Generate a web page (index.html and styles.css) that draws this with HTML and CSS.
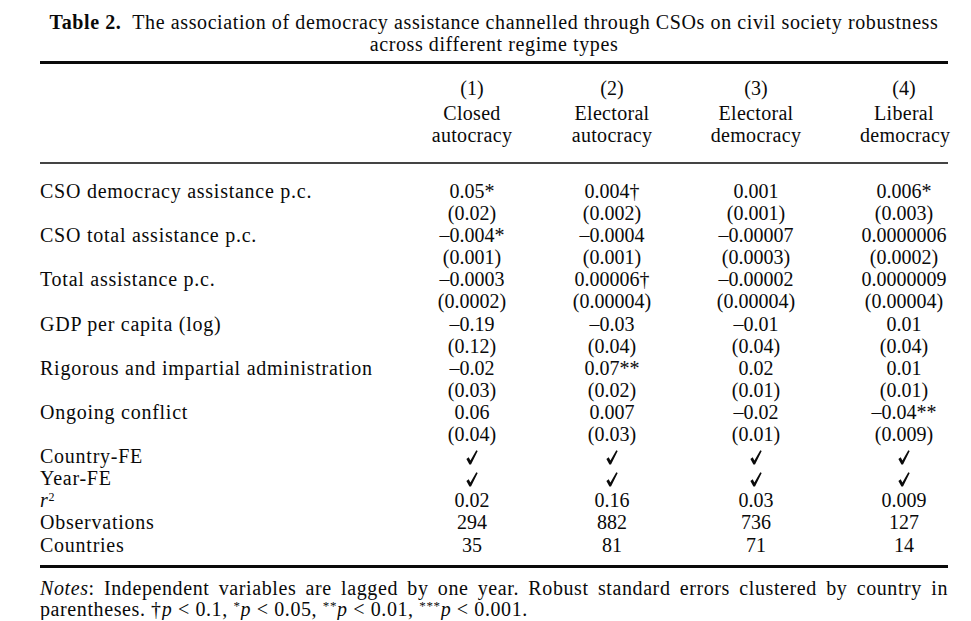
FILE: index.html
```html
<!DOCTYPE html>
<html lang="en">
<head>
<meta charset="utf-8">
<title>Table 2</title>
<link rel="stylesheet" href="styles.css">
</head>
<body>
<svg width="0" height="0" class="defs" aria-hidden="true">
  <defs>
    <symbol id="tick" viewBox="0 0 12 15">
      <path d="M0.4 8.9 L2.7 7.3 L4.4 10.5 L10.3 0.3 L11.7 1.1 L5.0 14.6 L3.4 14.6 Z"/>
    </symbol>
  </defs>
</svg>
<div class="page">
  <div class="caption">
    <p class="cap-line"><b>Table 2.</b>&nbsp; The association of democracy assistance channelled through CSOs on civil society robustness</p>
    <p class="cap-line">across different regime types</p>
  </div>

  <div class="table">
    <div class="head row">
      <div class="lab"></div>
      <div class="cell"><div class="num">(1)</div><div class="hd">Closed<br>autocracy</div></div>
      <div class="cell"><div class="num">(2)</div><div class="hd">Electoral<br>autocracy</div></div>
      <div class="cell"><div class="num">(3)</div><div class="hd">Electoral<br>democracy</div></div>
      <div class="cell c4"><div class="num">(4)</div><div class="hd">Liberal<br>democracy</div></div>
    </div>

    <div class="body">
      <div class="row"><div class="lab">CSO democracy assistance p.c.</div><div class="cell">0.05*</div><div class="cell">0.004†</div><div class="cell">0.001</div><div class="cell c4">0.006*</div></div>
      <div class="row"><div class="lab"></div><div class="cell">(0.02)</div><div class="cell">(0.002)</div><div class="cell">(0.001)</div><div class="cell c4">(0.003)</div></div>
      <div class="row"><div class="lab">CSO total assistance p.c.</div><div class="cell">–0.004*</div><div class="cell">–0.0004</div><div class="cell">–0.00007</div><div class="cell c4">0.0000006</div></div>
      <div class="row"><div class="lab"></div><div class="cell">(0.001)</div><div class="cell">(0.001)</div><div class="cell">(0.0003)</div><div class="cell c4">(0.0002)</div></div>
      <div class="row"><div class="lab">Total assistance p.c.</div><div class="cell">–0.0003</div><div class="cell">0.00006†</div><div class="cell">–0.00002</div><div class="cell c4">0.0000009</div></div>
      <div class="row"><div class="lab"></div><div class="cell">(0.0002)</div><div class="cell">(0.00004)</div><div class="cell">(0.00004)</div><div class="cell c4">(0.00004)</div></div>
      <div class="row"><div class="lab">GDP per capita (log)</div><div class="cell">–0.19</div><div class="cell">–0.03</div><div class="cell">–0.01</div><div class="cell c4">0.01</div></div>
      <div class="row"><div class="lab"></div><div class="cell">(0.12)</div><div class="cell">(0.04)</div><div class="cell">(0.04)</div><div class="cell c4">(0.04)</div></div>
      <div class="row"><div class="lab">Rigorous and impartial administration</div><div class="cell">–0.02</div><div class="cell">0.07**</div><div class="cell">0.02</div><div class="cell c4">0.01</div></div>
      <div class="row"><div class="lab"></div><div class="cell">(0.03)</div><div class="cell">(0.02)</div><div class="cell">(0.01)</div><div class="cell c4">(0.01)</div></div>
      <div class="row"><div class="lab">Ongoing conflict</div><div class="cell">0.06</div><div class="cell">0.007</div><div class="cell">–0.02</div><div class="cell c4">–0.04**</div></div>
      <div class="row"><div class="lab"></div><div class="cell">(0.04)</div><div class="cell">(0.03)</div><div class="cell">(0.01)</div><div class="cell c4">(0.009)</div></div>
      <div class="row"><div class="lab">Country-FE</div><div class="cell"><svg class="tick"><use href="#tick"/></svg></div><div class="cell"><svg class="tick"><use href="#tick"/></svg></div><div class="cell"><svg class="tick"><use href="#tick"/></svg></div><div class="cell c4"><svg class="tick"><use href="#tick"/></svg></div></div>
      <div class="row"><div class="lab">Year-FE</div><div class="cell"><svg class="tick"><use href="#tick"/></svg></div><div class="cell"><svg class="tick"><use href="#tick"/></svg></div><div class="cell"><svg class="tick"><use href="#tick"/></svg></div><div class="cell c4"><svg class="tick"><use href="#tick"/></svg></div></div>
      <div class="row"><div class="lab"><i>r</i><sup>2</sup></div><div class="cell">0.02</div><div class="cell">0.16</div><div class="cell">0.03</div><div class="cell c4">0.009</div></div>
      <div class="row"><div class="lab">Observations</div><div class="cell">294</div><div class="cell">882</div><div class="cell">736</div><div class="cell c4">127</div></div>
      <div class="row"><div class="lab">Countries</div><div class="cell">35</div><div class="cell">81</div><div class="cell">71</div><div class="cell c4">14</div></div>
    </div>
  </div>

  <div class="notes">
    <p class="note-line justify"><i>Notes</i>: Independent variables are lagged by one year. Robust standard errors clustered by country in</p>
    <p class="note-line">parentheses. †<i>p</i> &lt; 0.1, <sup>*</sup><i>p</i> &lt; 0.05, <sup>**</sup><i>p</i> &lt; 0.01, <sup>***</sup><i>p</i> &lt; 0.001.</p>
  </div>
</div>
</body>
</html>
```

FILE: styles.css
```css
html, body {
  margin: 0;
  padding: 0;
  background: #fff;
}

body {
  font-family: "Liberation Serif", "Times New Roman", serif;
  color: #0a0a0a;
}

.defs {
  position: absolute;
  width: 0;
  height: 0;
}

.page {
  width: 908px;
  margin-left: 40px;
  padding-top: 11px;
}

.caption {
  text-align: center;
  font-size: 20px;
  line-height: 22px;
  letter-spacing: 0.6px;
}

.cap-line {
  margin: 0;
}

.table {
  margin-top: 6px;
  border-top: 3px solid #0a0a0a;
  border-bottom: 3px solid #0a0a0a;
}

.row {
  display: grid;
  grid-template-columns: 363px 138px 142px 146px 119px;
  font-size: 20px;
  line-height: 22.1px;
}

.head {
  padding-top: 13px;
  padding-bottom: 16px;
  border-bottom: 2px solid #444;
  line-height: 22px;
}

.head .num {
  margin-bottom: 3px;
}

.cell {
  text-align: center;
  white-space: nowrap;
}

.c4 {
  padding-left: 31px;
}

.lab {
  letter-spacing: 0.75px;
  white-space: nowrap;
}

.hd {
  letter-spacing: 0.3px;
}

.body {
  padding-top: 16px;
  padding-bottom: 9px;
}

.lab sup {
  font-size: 12px;
  line-height: 0;
  vertical-align: 6px;
  letter-spacing: 0;
}

.tick {
  width: 12px;
  height: 15px;
  vertical-align: -2px;
  fill: #0a0a0a;
}

.notes {
  padding-top: 10px;
  font-size: 20px;
  line-height: 21px;
}

.note-line {
  margin: 0;
  letter-spacing: 0.6px;
}

.justify {
  text-align: justify;
  text-align-last: justify;
}

.notes sup {
  font-size: 13px;
  line-height: 0;
  vertical-align: 6px;
}
```
